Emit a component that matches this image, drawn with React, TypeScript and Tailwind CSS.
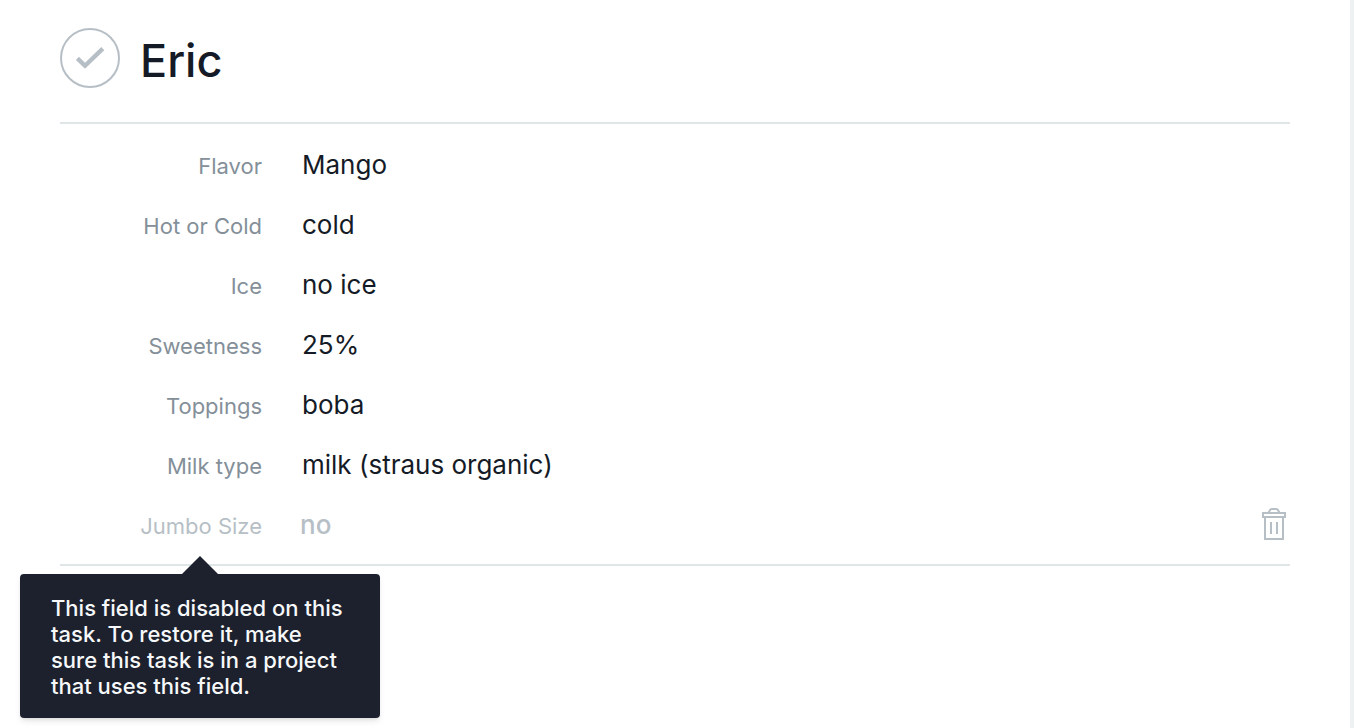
import React from "react";

type Field = { name: string; value: string };

const fields: Field[] = [
  { name: "Flavor", value: "Mango" },
  { name: "Hot or Cold", value: "cold" },
  { name: "Ice", value: "no ice" },
  { name: "Sweetness", value: "25%" },
  { name: "Toppings", value: "boba" },
  { name: "Milk type", value: "milk (straus organic)" },
];

function CheckIcon() {
  return (
    <svg viewBox="0 0 30 24" className="h-6 w-[30px]" fill="none" stroke="currentColor" strokeWidth={4.4} aria-hidden="true">
      <path d="M2.4 12.4 L10 19.8 L27.8 2.6" />
    </svg>
  );
}

function TrashIcon() {
  return (
    <svg viewBox="0 0 24 32" className="h-8 w-6" fill="none" stroke="currentColor" strokeWidth={2} aria-hidden="true">
      <path d="M6.5 4.5 L8.5 1.5 Q9 1 10 1 H14 Q15 1 15.5 1.5 L17.5 4.5" />
      <rect x={1} y={5} width={22} height={4} />
      <path d="M3 9 V31 H21 V9" />
      <path d="M9 14 V26 M15 14 V26" />
    </svg>
  );
}

function Tooltip({ id, children }: { id: string; children: React.ReactNode }) {
  return (
    <div id={id} role="tooltip" className="absolute -left-10 top-full mt-[19px] w-90 rounded bg-[#1c212d] px-[31px] pt-[21px] pb-[19px] text-[22px] leading-[26px] font-medium text-[#f6f8f9] shadow-md">
      <svg viewBox="0 0 36 18" className="absolute bottom-full left-1/2 h-[18px] w-9 -translate-x-1/2" aria-hidden="true">
        <path d="M0 18 L18 0 L36 18 Z" fill="#1c212d" />
      </svg>
      {children}
    </div>
  );
}

function FieldRow({ name, value }: Field) {
  return (
    <div className="flex items-baseline gap-10">
      <dt className="w-[202px] shrink-0 text-right text-[22px] text-[#848f99]">{name}</dt>
      <dd className="text-[26px] leading-[60px] text-[#151b26]">{value}</dd>
    </div>
  );
}

export default function App() {
  return (
    <main className="min-h-screen border-r-4 border-[#edf1f2] bg-white px-15 font-['Inter','Liberation_Sans',sans-serif]">
      <header className="flex items-start gap-5 border-b-2 border-[#e0e6e8] pt-7 pb-7">
        <button
          type="button"
          aria-label="Mark complete"
          className="flex size-15 shrink-0 items-center justify-center rounded-full border-2 border-[#b7bfc6] text-[#b7bfc6]"
        >
          <CheckIcon />
        </button>
        <h1 className="text-[45px] leading-[66px] font-medium text-[#151b26]">Eric</h1>
      </header>

      <dl className="border-b-2 border-[#e0e6e8] pt-[11px] pb-[9px]">
        {fields.map((f) => (
          <FieldRow key={f.name} name={f.name} value={f.value} />
        ))}
        <div className="relative flex items-baseline gap-[38px] text-[#b7bfc6]">
          <dt aria-describedby="disabled-field-tip" className="w-[202px] shrink-0 text-right text-[22px]">
            Jumbo Size
          </dt>
          <dd className="flex grow items-center justify-between text-[26px] leading-[60px] font-medium">
            no
            <button type="button" aria-label="Remove field" className="px-1 pb-0.5">
              <TrashIcon />
            </button>
            <Tooltip id="disabled-field-tip">
              This field is disabled on this task. To restore it, make sure this task is in a project that uses this field.
            </Tooltip>
          </dd>
        </div>
      </dl>
    </main>
  );
}
